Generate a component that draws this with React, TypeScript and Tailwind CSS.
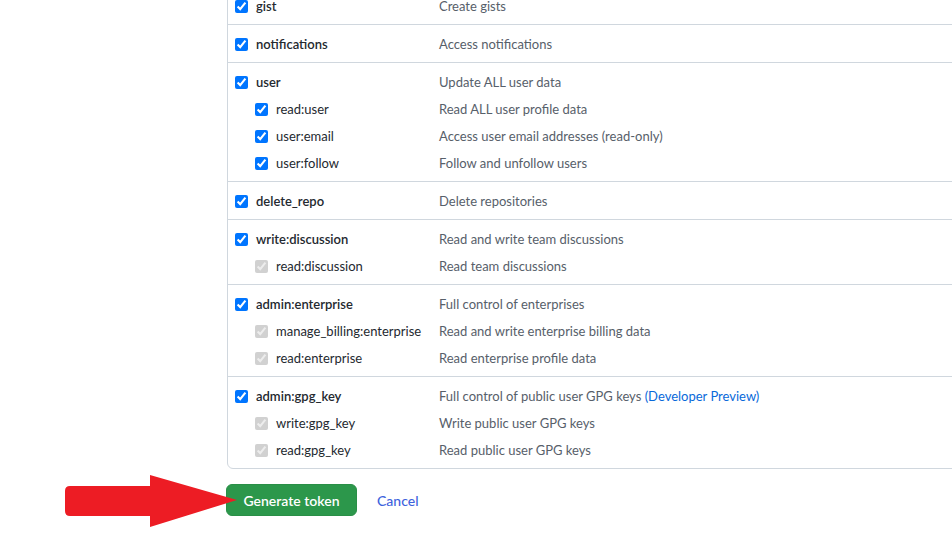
import React from "react";

type Scope = {
  name: string;
  desc: string;
  link?: string;
  subs?: [string, string][];
  locked?: boolean;
};

const scopes: Scope[] = [
  { name: "gist", desc: "Create gists" },
  { name: "notifications", desc: "Access notifications" },
  {
    name: "user",
    desc: "Update ALL user data",
    subs: [
      ["read:user", "Read ALL user profile data"],
      ["user:email", "Access user email addresses (read-only)"],
      ["user:follow", "Follow and unfollow users"],
    ],
  },
  { name: "delete_repo", desc: "Delete repositories" },
  {
    name: "write:discussion",
    desc: "Read and write team discussions",
    subs: [["read:discussion", "Read team discussions"]],
    locked: true,
  },
  {
    name: "admin:enterprise",
    desc: "Full control of enterprises",
    subs: [
      ["manage_billing:enterprise", "Read and write enterprise billing data"],
      ["read:enterprise", "Read enterprise profile data"],
    ],
    locked: true,
  },
  {
    name: "admin:gpg_key",
    desc: "Full control of public user GPG keys",
    link: "(Developer Preview)",
    subs: [
      ["write:gpg_key", "Write public user GPG keys"],
      ["read:gpg_key", "Read public user GPG keys"],
    ],
    locked: true,
  },
];

function Arrow() {
  return (
    <svg className="absolute left-[64px] top-[474px]" width="176" height="54" viewBox="0 0 176 54">
      <path
        d="M6 12 L86 12 L86 1 L173 26 L86 53 L86 42 L6 42 Q1 42 1 37 L1 17 Q1 12 6 12 Z"
        fill="#ed1c24"
      />
    </svg>
  );
}

export default function App() {
  return (
    <div
      className="relative w-[952px] h-[542px] overflow-hidden bg-white text-[13px]"
      style={{ fontFamily: "Lato, 'Liberation Sans', sans-serif" }}
    >
      <div className="ml-[227px] -mt-[14px] w-[780px]">
        {/* Scopes box */}
        <div className="border border-[#d0d7de] rounded-bl-[6px]">
          {scopes.map((s, i) => (
            <div key={s.name} className={`pt-[6px] pb-[4px] pl-[7px] ${i > 0 ? "border-t border-[#d0d7de]" : ""}`}>
              <div className="flex items-center h-[27px]">
                <div className="w-[204px] flex items-center gap-[8px]">
                  <input type="checkbox" defaultChecked className="w-[13px] h-[13px]" />
                  <span className="font-semibold text-[#24292f]">{s.name}</span>
                </div>
                <span className="text-[#57606a]">
                  {s.desc}
                  {s.link && <span className="text-[#0969da]"> {s.link}</span>}
                </span>
              </div>
              {s.subs?.map(([n, d]) => (
                <div key={n} className="flex items-center h-[27px]">
                  <div className="w-[204px] flex items-center gap-[8px] pl-[20px]">
                    <input
                      type="checkbox"
                      defaultChecked
                      disabled={s.locked}
                      className="w-[13px] h-[13px]"
                    />
                    <span className="text-[#24292f]">{n}</span>
                  </div>
                  <span className="text-[#57606a]">{d}</span>
                </div>
              ))}
            </div>
          ))}
        </div>

        {/* Actions */}
        <div className="mt-[15px] -ml-px flex items-center gap-[20px]">
          <button className="h-[32px] w-[131px] rounded-[6px] bg-[#2c974b] border border-[#2a8f47] text-white text-[14px] font-semibold">
            Generate token
          </button>
          <a className="text-[#3e63dd] text-[14px] font-medium">Cancel</a>
        </div>
      </div>

      <Arrow />
    </div>
  );
}
